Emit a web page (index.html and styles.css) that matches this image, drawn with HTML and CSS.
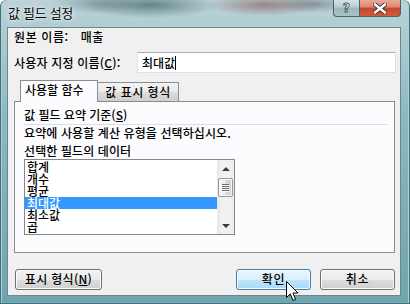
FILE: index.html
```html
<!DOCTYPE html>
<html lang="ko">
<head>
<meta charset="utf-8">
<title>값 필드 설정</title>
<link rel="stylesheet" href="styles.css">
</head>
<body>
<div class="window">
  <div class="titlebar">
    <span class="title">값 필드 설정</span>
    <div class="caption">
      <div class="cbtn help">?</div>
      <div class="cbtn close">
        <svg width="14" height="11" viewBox="0 0 14 11"><path d="M2 1.5 L12 9.5 M12 1.5 L2 9.5" stroke="#3a2a28" stroke-width="4.2" stroke-linecap="square"/><path d="M2 1.5 L12 9.5 M12 1.5 L2 9.5" stroke="#ffffff" stroke-width="2.4" stroke-linecap="square"/></svg>
      </div>
    </div>
  </div>
  <div class="client">
    <div class="row source"><span>원본 이름:</span><span class="value">매출</span></div>
    <div class="row custom">
      <span class="label">사용자 지정 이름(<u>C</u>):</span>
      <div class="textbox">최대값<span class="caret"></span></div>
    </div>
    <div class="tabs">
      <div class="tab active">사용할 함수</div>
      <div class="tab">값 표시 형식</div>
    </div>
    <div class="panel">
      <div class="group-head">값 필드 요약 기준(<u>S</u>)</div>
      <div class="desc first">요약에 사용할 계산 유형을 선택하십시오.</div>
      <div class="desc">선택한 필드의 데이터</div>
      <div class="listbox">
        <ul class="items">
          <li>합계</li>
          <li>개수</li>
          <li>평균</li>
          <li class="selected">최대값</li>
          <li>최소값</li>
          <li>곱</li>
        </ul>
        <div class="scrollbar">
          <div class="arrow up"></div>
          <div class="thumb"><i></i><i></i><i></i><i></i></div>
          <div class="track"></div>
          <div class="arrow down"></div>
        </div>
      </div>
    </div>
    <div class="buttons">
      <div class="btn format">표시 형식(<u>N</u>)</div>
      <div class="spacer"></div>
      <div class="btn hot">확인</div>
      <div class="btn">취소</div>
    </div>
  </div>
  <svg class="cursor" width="13" height="21" viewBox="0 0 13 21"><path d="M0.5 0.5 L0.5 16.5 L4.3 12.9 L7 19.5 L9.6 18.4 L7 12 L12 12 Z" fill="#ffffff" stroke="#000000" stroke-width="1" stroke-linejoin="miter"/></svg>
</div>
</body>
</html>
```
FILE: styles.css
```css
* { box-sizing: border-box; }
html, body { margin: 0; padding: 0; }
body {
  width: 410px;
  height: 304px;
  overflow: hidden;
  font-family: "Noto Sans CJK KR", "Noto Sans", sans-serif;
  font-size: 12px;
  font-weight: 500;
  color: #000;
}
.window {
  position: relative;
  width: 410px;
  height: 304px;
  padding: 0 9px 8px 7px;
  display: flex;
  flex-direction: column;
  border-radius: 6px 6px 0 0;
  background:
    radial-gradient(ellipse 70px 13px at 150px 5px, rgba(30, 70, 72, 0.55), rgba(30, 70, 72, 0)),
    radial-gradient(ellipse 45px 11px at 95px 3px, rgba(60, 90, 95, 0.35), rgba(60, 90, 95, 0)),
    radial-gradient(ellipse 60px 11px at 265px 5px, rgba(110, 40, 40, 0.45), rgba(110, 40, 40, 0)),
    radial-gradient(ellipse 40px 9px at 315px 4px, rgba(60, 80, 85, 0.4), rgba(60, 80, 85, 0)),
    linear-gradient(to bottom, #bdd3d8 0, #b0cdd2 26px, #8ab8c0 40%, #6fa5af 100%);
  box-shadow: inset 1px 0 0 #44707a, inset -1px 0 0 #44707a, inset 0 -1px 0 #44707a, inset 2px 0 0 #a9d0d6, inset -2px 0 0 #a9d0d6;
}
.titlebar {
  height: 27px;
  display: flex;
  align-items: flex-start;
}
.title {
  margin: 4px 0 0 1px;
  font-size: 13px;
  line-height: 17px;
  letter-spacing: -0.3px;
  font-weight: 400;
  text-shadow: 0 0 6px rgba(255, 255, 255, 0.9), 0 0 2px rgba(255, 255, 255, 0.9);
}
.caption {
  margin-left: auto;
  display: flex;
}
.cbtn {
  height: 17px;
  display: flex;
  align-items: center;
  justify-content: center;
  border: 1px solid #4f6168;
  border-top: none;
}
.help {
  width: 26px;
  border-right: none;
  border-radius: 0 0 0 4px;
  background: linear-gradient(to bottom, #d3e2e5 0, #b9cdd1 45%, #9db7bc 50%, #a9c2c6 100%);
  font-family: "DejaVu Sans", sans-serif;
  font-weight: bold;
  font-size: 12px;
  color: #fff;
  -webkit-text-stroke: 0.8px #3e4a50;
  line-height: 16px;
}
.close {
  width: 42px;
  border-radius: 0 0 4px 0;
  background: linear-gradient(to bottom, #e9a99a 0, #dc8571 45%, #c9452c 50%, #d2583c 100%);
}
.client {
  flex: 1;
  background: #f0f0f0;
  border: 1px solid #6f8590;
  padding: 1px 4px 0 6px;
  display: flex;
  flex-direction: column;
}
.row {
  display: flex;
  align-items: center;
}
.source {
  height: 16px;
  line-height: 16px;
  letter-spacing: 0.6px;
}
.source .value { margin-left: 12px; }
.custom {
  margin-top: 7px;
  height: 21px;
  line-height: 16px;
}
.custom .label { letter-spacing: 0.2px; }
.textbox {
  margin-left: auto;
  width: 259px;
  height: 21px;
  background: #fff;
  border: 1px solid #dbdfe6;
  border-top-color: #abadb3;
  border-left-color: #e2e3ea;
  padding: 1px 0 0 4px;
  line-height: 16px;
  display: flex;
  align-items: center;
}
.caret {
  display: inline-block;
  width: 1px;
  height: 14px;
  background: #000;
}
u { text-decoration: underline; text-underline-offset: 1px; }
.tabs {
  margin-top: 7px;
  height: 21px;
  display: flex;
  align-items: flex-end;
  padding-left: 6px;
  position: relative;
  z-index: 1;
}
.tab {
  height: 19px;
  width: 81px;
  text-align: center;
  line-height: 17px;
  border: 1px solid #898c95;
  border-bottom: none;
  border-left: none;
  background: linear-gradient(to bottom, #f2f2f2 0, #ebebeb 50%, #dddddd 50%, #cfcfcf 100%);
  letter-spacing: 0.5px;
}
.tab.active {
  height: 22px;
  width: 78px;
  margin-bottom: -1px;
  border-left: 1px solid #898c95;
  text-align: left;
  padding-left: 4px;
  line-height: 18px;
  background: #fcfcfe;
  letter-spacing: 0;
}
.panel {
  height: 152px;
  margin-right: 1px;
  border: 1px solid #898c95;
  background: #fcfcfe;
  padding: 5px 6px 0 9px;
  display: flex;
  flex-direction: column;
}
.group-head {
  height: 18px;
  line-height: 16px;
  border-bottom: 1px solid #d5dfe5;
  margin-right: 1px;
}
.desc {
  height: 16px;
  line-height: 16px;
  letter-spacing: 0.1px;
}
.desc.first { height: 18px; }
.listbox {
  width: 211px;
  height: 76px;
  border: 1px solid #828790;
  background: #fff;
  display: flex;
}
.items {
  list-style: none;
  margin: 0;
  padding: 1px 0 0 0;
  flex: 1;
}
.items li {
  height: 12px;
  line-height: 12px;
  padding-left: 2px;
  white-space: nowrap;
}
.items li.selected {
  background: #3399ff;
  color: #fff;
}
.scrollbar {
  width: 17px;
  display: flex;
  flex-direction: column;
  background: linear-gradient(to right, #e7e7e7 0, #f1f1f1 30%, #f1f1f1 70%, #ececec 100%);
}
.arrow {
  height: 17px;
  display: flex;
  align-items: center;
  justify-content: center;
}
.arrow::after {
  content: "";
  width: 0;
  height: 0;
  border-left: 4px solid transparent;
  border-right: 4px solid transparent;
}
.arrow.up::after { border-bottom: 4px solid #3c3c3c; margin-top: 1px; }
.arrow.down::after { border-top: 4px solid #3c3c3c; }
.thumb {
  margin: 1px 1px 0 1px;
  height: 19px;
  border: 1px solid #9a9a9a;
  border-radius: 2px;
  background: linear-gradient(to right, #fafafa 0, #eaeaea 50%, #d9d9d9 50%, #d2d2d2 100%);
  box-shadow: inset 0 0 0 1px #f7f7f7;
  display: flex;
  flex-direction: column;
  align-items: center;
  justify-content: center;
  gap: 1px;
}
.thumb i {
  display: block;
  width: 7px;
  height: 1px;
  background: #6a6a6a;
  box-shadow: 0 1px 0 #fbfbfb;
}
.track { flex: 1; }
.buttons {
  margin-top: 16px;
  display: flex;
  height: 21px;
  gap: 9px;
  padding-right: 1px;
}
.spacer { flex: 1; }
.btn {
  width: 75px;
  height: 21px;
  border: 1px solid #707070;
  border-radius: 3px;
  background: linear-gradient(to bottom, #f2f2f2 0, #ebebeb 50%, #dddddd 50%, #cfcfcf 100%);
  box-shadow: inset 0 0 0 1px #fbfbfb;
  text-align: center;
  line-height: 18px;
  letter-spacing: 0.6px;
}
.btn.format {
  width: 87px;
  margin-left: 1px;
  letter-spacing: 0.3px;
}
.btn.hot {
  border-color: #3c7fb1;
  background: linear-gradient(to bottom, #eaf6fd 0, #d9f0fc 50%, #bee6fd 50%, #a7d9f5 100%);
}
.cursor {
  position: absolute;
  left: 286px;
  top: 281px;
}
```
